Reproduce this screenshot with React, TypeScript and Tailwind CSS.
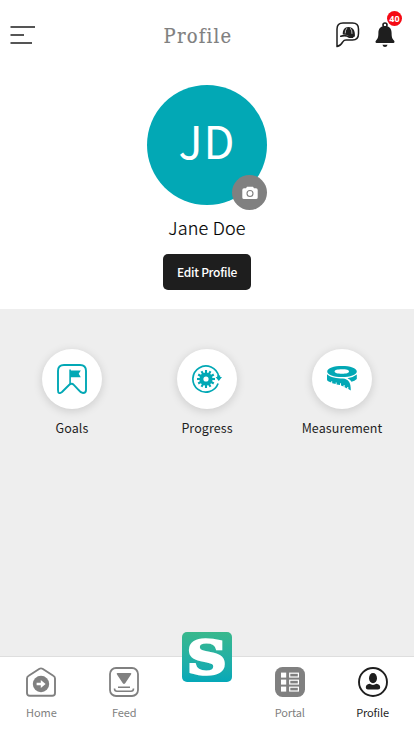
import React from "react";

const teal = "#02a8b5";

function Menu() {
  return (
    <svg width="26" height="20" viewBox="0 0 26 20" stroke="#1e1e1e" strokeWidth="1.7">
      <path d="M.5 2H25M.5 10H14M.5 18H22" />
    </svg>
  );
}

function CapChat() {
  return (
    <svg width="24" height="26" viewBox="0 0 24 26" fill="none" stroke="#1e1e1e" strokeWidth="1.5" strokeLinejoin="round" strokeLinecap="round">
      <path d="M1 24.6V7Q1 1 7 1H16.5Q22.5 1 22.5 7V11.5Q22.5 18 16.5 18H10Q8 18 6.8 19.8Q4.5 23.8 1 24.6Z" />
      <path d="M6.8 12.6C6.4 8 8.6 5 12.4 5C17 5 19.4 8.5 18.9 14.4Q16.5 15.8 13.8 14.8Q11 12.4 6.8 12.6Z" fill="#1e1e1e" stroke="none" />
      <path d="M4.8 14.2Q9.5 12.6 13.5 15.2H16.5" strokeWidth="1.7" />
      <path d="M10.6 6.5Q9 8.5 9.2 11M14.6 6.5Q16.2 8.5 16 11.5" stroke="#fff" strokeWidth=".7" />
    </svg>
  );
}

function Bell() {
  return (
    <svg width="20" height="26" viewBox="0 0 20 26" fill="#1e1e1e">
      <circle cx="10" cy="3" r="2" fill="none" stroke="#1e1e1e" strokeWidth="1.6" />
      <path d="M10 4C5.3 4 3.4 7.2 3.4 11C3.4 15.6 2.7 16.5 1.2 18.3C0 19.6.4 21 1.6 21H18.4C19.6 21 20 19.6 18.8 18.3C17.3 16.5 16.6 15.6 16.6 11C16.6 7.2 14.7 4 10 4Z" />
      <path d="M7.4 22.8H12.6Q12 25 10 25T7.4 22.8Z" />
    </svg>
  );
}

function Camera() {
  return (
    <svg width="16" height="14" viewBox="0 0 16 14">
      <path d="M2 2.2H4L5 .7H11L12 2.2H14Q15.7 2.2 15.7 4V11.4Q15.7 13 14 13H2Q.3 13 .3 11.4V4Q.3 2.2 2 2.2Z" fill="#fff" />
      <circle cx="8" cy="7.5" r="3" fill="#fff" stroke="#808080" strokeWidth="1.1" />
    </svg>
  );
}

function GoalsIcon() {
  return (
    <svg width="30" height="30" viewBox="0 0 30 30" fill="none" stroke={teal} strokeWidth="1.9" strokeLinejoin="round">
      <path d="M1 26V7Q1 1 7 1H23Q29 1 29 7V26Q29 29 26 29Q24 29 21.5 25.8L16.8 20.8Q14.7 18.7 12.3 20.8L5 28Q1 31 1 26Z" />
      <path d="M13.1 20V5.5" strokeWidth="1.6" />
      <path d="M13 6.5H23.8L21.7 9.8L23.8 13.2H13Z" fill={teal} stroke="none" />
    </svg>
  );
}

function ProgressIcon() {
  return (
    <svg width="30" height="28" viewBox="0 0 30 28" fill="none" stroke={teal}>
      <path d="M26.6 11.3A13 13 0 1 0 26.1 18.5" strokeWidth="1.7" />
      <path d="M25.2 10.5H28.2V12.1H30L26.8 16L23.6 12.1H25.2Z" fill={teal} stroke="none" />
      {[0, 30, 60, 90, 120, 150].map((a) => (
        <path key={a} d="M14 5V23" strokeWidth="2.1" transform={`rotate(${a} 14 14)`} />
      ))}
      <circle cx="14" cy="14" r="6.6" fill={teal} stroke="none" />
      <circle cx="14" cy="14" r="2.6" fill="#fff" stroke="none" />
    </svg>
  );
}

function TapeIcon() {
  return (
    <svg width="30" height="26" viewBox="0 0 30 26" fill={teal}>
      <path fillRule="evenodd" d="M15 0C23 0 29.8 2 29.8 5.5S23 11 15 11S.2 9 .2 5.5S7 0 15 0ZM15 3.3C10.5 3.3 7.6 4 7.6 5.5S10.5 7.7 15 7.7S22 7 22 5.5S19.5 3.3 15 3.3Z" />
      <path d="M0 8.2C3 11.5 10 12.3 16 12.5C21 13 24 16 23.8 24.5L21.3 23V21H20.2V22.5L17.6 21.2V19H16.6V20.5L14 19.4V17.3H13V19L9.6 18.5V16.5H8.7V18L5.2 17.2V15.3H4.2V16.5L1.7 15.5Q0 15 0 13.5Z" />
      <path d="M20.5 12.2Q26.3 11.3 29.8 8.4V13Q27.7 15.2 24.5 15.8Q23.3 13.5 20.5 12.2Z" />
    </svg>
  );
}

function HomeIcon() {
  return (
    <svg width="30" height="30" viewBox="0 0 30 30" fill="none" stroke="#808080" strokeWidth="1.9" strokeLinejoin="round">
      <path d="M1 11.5Q1 9.8 2.7 8.8L13.5 1.8Q15 .9 16.5 1.8L27.3 8.8Q29 9.8 29 11.5V26Q29 28.8 26.2 28.8H3.8Q1 28.8 1 26Z" />
      <circle cx="15" cy="17" r="8.2" fill="#808080" stroke="none" />
      <path d="M10.6 15.8H14.8V13L19.6 17L14.8 21V18.2H10.6Z" fill="#fff" stroke="none" />
    </svg>
  );
}

function FeedIcon() {
  return (
    <svg width="30" height="30" viewBox="0 0 30 30" fill="none" stroke="#808080" strokeWidth="1.8">
      <rect x="1" y="1" width="28" height="28" rx="6" />
      <path d="M8.5 6H21.5Q23 6 22 7.5L16.2 16.2Q15 17.8 13.8 16.2L8 7.5Q7 6 8.5 6Z" fill="#808080" stroke="none" />
      <path d="M9 20.3H21M5.5 21.5Q5.5 24.2 8 24.2H22Q24.5 24.2 24.5 21.5" strokeWidth="1.6" />
    </svg>
  );
}

function PortalIcon() {
  return (
    <svg width="30" height="30" viewBox="0 0 30 30">
      <rect width="30" height="30" rx="7.5" fill="#808080" />
      {[5.6, 12.6, 19.6].map((y) => (
        <g key={y}>
          <rect x="6" y={y} width="5.2" height="5" fill="#fff" />
          <rect x="14.7" y={y + 0.6} width="8.7" height="3.8" fill="none" stroke="#fff" strokeWidth="1.2" />
        </g>
      ))}
    </svg>
  );
}

function PersonIcon() {
  return (
    <svg width="30" height="30" viewBox="0 0 30 30" fill="#1e1e1e">
      <circle cx="15" cy="15" r="14" fill="none" stroke="#1e1e1e" strokeWidth="1.9" />
      <ellipse cx="15" cy="11.2" rx="4" ry="5.1" />
      <path d="M11.6 16.8Q15 19 18.4 16.8Q22.2 17.5 22.2 20.5Q22.2 22.5 20 22.5H10Q7.8 22.5 7.8 20.5Q7.8 17.5 11.6 16.8Z" />
    </svg>
  );
}

function Action({ icon, label }: { icon: React.ReactNode; label: string }) {
  return (
    <div className="flex w-[135px] flex-col items-center">
      <div className="flex h-[60px] w-[60px] items-center justify-center rounded-full bg-white shadow-[0_2px_10px_rgba(0,0,0,0.15)]">{icon}</div>
      <div className="mt-[9px] text-[12.5px] leading-5 tracking-[0.08px]">{label}</div>
    </div>
  );
}

function Tab({ icon, label, active = false }: { icon: React.ReactNode; label: string; active?: boolean }) {
  return (
    <div className={`flex w-[83px] flex-col items-center pt-[10px] ${active ? "text-[#1e1e1e]" : "text-[#808080]"}`}>
      {icon}
      <div className="mt-[7px] text-[11px] leading-4 tracking-[-0.1px]">{label}</div>
    </div>
  );
}

export default function App() {
  return (
    <div className="flex h-[736px] w-[414px] flex-col overflow-hidden bg-white font-['Noto_Sans_CJK_SC','Noto_Sans_CJK_JP',sans-serif] text-[#1e1e1e]">
      <header className="grid h-[70px] grid-cols-[1fr_auto_1fr] items-center pr-[19px] pl-[10px]">
        <Menu />
        <h1 className="-ml-[9px] pt-px font-['DejaVu_Serif_Condensed','DejaVu_Serif',serif] text-[20px] leading-6 tracking-[1.2px] text-[#808080] [-webkit-text-stroke:0.15px_#808080]">Profile</h1>
        <div className="flex w-[59px] gap-[15px] justify-self-end">
          <CapChat />
          <div className="relative">
            <Bell />
            <span className="absolute -top-[11px] left-[12px] flex h-[15px] w-[15px] items-center justify-center rounded-full bg-[#f50a14] font-['Open_Sans',sans-serif] text-[9px] leading-none font-bold text-white">40</span>
          </div>
        </div>
      </header>

      <section className="flex h-[239px] flex-col items-center pt-[15px]">
        <div className="relative flex h-[120px] w-[120px] items-center justify-center rounded-full bg-[#02a8b5]">
          <span className="-mt-[11px] text-[45px] leading-[60px] tracking-[1px] text-white">JD</span>
          <div className="absolute right-0 -bottom-[5px] flex h-[35px] w-[35px] items-center justify-center rounded-full bg-[#808080]"><Camera /></div>
        </div>
        <div className="mt-[9px] text-[18px] leading-[26px] font-light tracking-[0.2px] text-black [-webkit-text-stroke:0.2px_#000]">Jane Doe</div>
        <button className="mt-[14px] h-9 w-[88px] rounded-[5px] bg-[#1e1e1e] text-[12px] leading-9 font-medium tracking-[-0.3px] text-white">Edit Profile</button>
      </section>

      <main className="flex h-[347px] justify-center bg-[#eee] pt-[40px]">
        <Action icon={<GoalsIcon />} label="Goals" />
        <Action icon={<ProgressIcon />} label="Progress" />
        <Action icon={<TapeIcon />} label="Measurement" />
      </main>

      <nav className="flex h-[80px] justify-center border-t border-[#dedede] bg-white">
        <Tab icon={<HomeIcon />} label="Home" />
        <Tab icon={<FeedIcon />} label="Feed" />
        <div className="flex w-[83px] justify-center">
          <div className="-mt-[25px] flex h-[50px] w-[50px] items-center justify-center rounded-[5px] bg-gradient-to-b from-[#38b88c] to-[#04a8b8]">
            <span className="mt-[2px] block scale-x-[1.2] font-['DejaVu_Serif',serif] text-[46px] leading-[50px] font-bold text-white [-webkit-text-stroke:2.5px_#fff]">S</span>
          </div>
        </div>
        <Tab icon={<PortalIcon />} label="Portal" />
        <Tab icon={<PersonIcon />} label="Profile" active />
      </nav>
    </div>
  );
}
